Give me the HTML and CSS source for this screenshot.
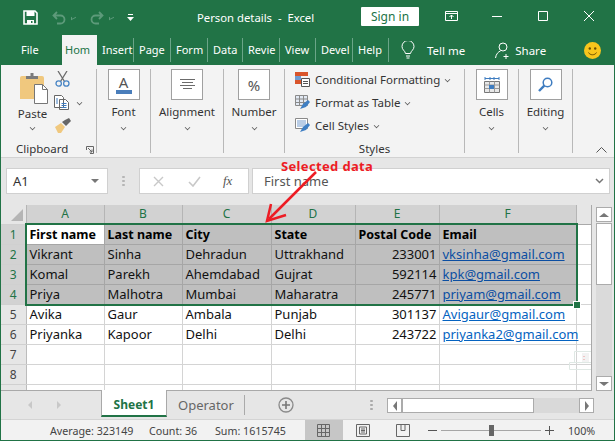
FILE: index.html
```html
<!DOCTYPE html>
<html lang="en">
<head>
  <meta charset="UTF-8" />
  <title>Person details - Excel</title>
  <link rel="stylesheet" href="styles.css">
</head>
<body>
<div class="window">

  <!-- Title bar -->
  <div class="titlebar">
    <svg class="save" width="15" height="15" viewBox="0 0 15 15"><path d="M1 1h11l2 2v11H1z" fill="none" stroke="#fff" stroke-width="1.6"/><path d="M3.5 1h8v5h-8zM4 10h7v4H4z" fill="#fff"/><path d="M8 11h1.5v2H8z" fill="#217346"/></svg>
    <svg class="undo" width="14" height="14" viewBox="0 0 14 14"><path d="M5 1L1.500 4.500 5 8M2 4.500h6.500a4 4 0 0 1 0 8H5" fill="none" stroke="#5d9a7a" stroke-width="1.800"/></svg>
    <span class="qa-caret"></span>
    <svg class="redo" width="14" height="14" viewBox="0 0 14 14"><path d="M9 1l3.500 3.500L9 8M12 4.500H5.500a4 4 0 0 0 0 8H9" fill="none" stroke="#5d9a7a" stroke-width="1.800"/></svg>
    <span class="qa-caret"></span>
    <svg class="qa-more" width="7" height="8" viewBox="0 0 7 8"><path d="M1 0h5v1H1zM0 3h7L3.500 7z" fill="#fff"/></svg>
    <div class="doc-title">Person details &nbsp;-&nbsp; Excel</div>
    <button class="signin">Sign in</button>
    <svg class="win-icon display" width="13" height="10" viewBox="0 0 13 10"><path d="M.5.500h12v9H.500zM.5 2.500h12M6.500 8V4M4.500 6l2-2 2 2" fill="none" stroke="#fff"/></svg>
    <svg class="win-icon minimize" width="10" height="10" viewBox="0 0 10 10"><path d="M0 5.500h10" stroke="#fff"/></svg>
    <svg class="win-icon maximize" width="10" height="10" viewBox="0 0 10 10"><path d="M.5.500h9v9h-9z" fill="none" stroke="#fff"/></svg>
    <svg class="win-icon close" width="10" height="10" viewBox="0 0 10 10"><path d="M0 0l10 10M10 0L0 10" stroke="#fff"/></svg>
  </div>

  <!-- Ribbon tabs -->
  <div class="tabs">
    <span class="tab file">File</span>
    <span class="tab home">Hom</span>
    <span class="tab w37">Insert</span>
    <span class="tab w37">Page</span>
    <span class="tab w37">Form</span>
    <span class="tab w35">Data</span>
    <span class="tab w37">Revie</span>
    <span class="tab w36">View</span>
    <span class="tab w37">Devel</span>
    <span class="tab w36">Help</span>
    <svg class="bulb" width="14" height="18" viewBox="0 0 14 18"><path d="M4.500 12.500C4 9.500 1 9 1 5.500a6 6 0 0 1 12 0c0 3.500-3 4-3.500 7zM5 15h4M5.500 17h3" fill="none" stroke="#fff"/></svg>
    <span class="tell">Tell me</span>
    <svg class="share-icon" width="16" height="17" viewBox="0 0 16 17"><circle cx="8" cy="5" r="4" fill="none" stroke="#fff"/><path d="M.5 16c.5-4 3-6.500 5-7M11 12v5M8.500 14.500h5" fill="none" stroke="#fff"/></svg>
    <span class="share">Share</span>
    <svg class="smiley" width="17" height="17" viewBox="0 0 17 17"><circle cx="8.500" cy="8.500" r="8.500" fill="#f8c51c"/><circle cx="5.800" cy="6.500" r="1.200" fill="#6b4e00"/><circle cx="11.200" cy="6.500" r="1.200" fill="#6b4e00"/><path d="M4.500 10.500c1.500 3 6.500 3 8 0" fill="none" stroke="#6b4e00"/></svg>
  </div>

  <!-- Ribbon -->
  <div class="ribbon">
    <section class="group clipboard">
      <div class="clip-main">
        <div class="paste">
          <svg width="29" height="31" viewBox="0 0 29 31"><path d="M1 5q0-2 2-2h20q2 0 2 2v21H1z" fill="#f0c87e"/><path d="M7 3h4.500V0h3v3H19v3H7z" fill="#7b7b7b"/><path d="M15.500 11.500h8l5 5v14h-13z" fill="#fff" stroke="#767676"/><path d="M23.500 11.500v5h5" fill="none" stroke="#767676"/></svg>
          <span class="paste-label">Paste</span>
          <span class="caret"></span>
        </div>
        <div class="clip-tools">
          <svg width="15" height="16" viewBox="0 0 15 16"><path d="M3 0l6.500 10.500M12 0L5.500 10.500" stroke="#6b6b6b" stroke-width="1.300"/><circle cx="3.700" cy="12.500" r="2.700" fill="none" stroke="#4a86c5" stroke-width="1.300"/><circle cx="11.300" cy="12.500" r="2.700" fill="none" stroke="#4a86c5" stroke-width="1.300"/></svg>
          <div class="copy-row">
            <svg width="15" height="15" viewBox="0 0 15 15"><path d="M.5.500h7l2 2v10h-9zM5.500 4.500h6l3 3v7h-9z" fill="#fff" stroke="#666"/><path d="M7.500 8.500h5M7.500 10.500h5M7.500 12.500h5M2 4h2M2 6h2M2 8h2" stroke="#3e7cc0"/></svg>
            <span class="caret small-gap"></span>
          </div>
          <svg width="16" height="15" viewBox="0 0 16 15"><path d="M0 9l6-4 4 4-4 6H3z" fill="#f0c87e"/><path d="M7 4l4 4 2-2 3-3-2-3-4 2z" fill="#666"/></svg>
        </div>
      </div>
      <div class="group-label clip-label">Clipboard
        <svg class="launcher" width="8" height="8" viewBox="0 0 8 8"><path d="M.5 4V.5H7.500V7.500H4M2 2l4 4M6 3.500V6H3.500" fill="none" stroke="#666"/></svg>
      </div>
    </section>

    <section class="group font-group">
      <div class="big-btn"><span class="font-a">A</span></div>
      <div class="big-label">Font</div>
      <span class="caret"></span>
    </section>

    <section class="group align-group">
      <div class="big-btn">
        <svg width="15" height="11" viewBox="0 0 15 11"><path d="M0 .500h15M2 3.500h11M0 6.500h15M3 9.500h9" stroke="#6b6b6b"/></svg>
      </div>
      <div class="big-label">Alignment</div>
      <span class="caret"></span>
    </section>

    <section class="group number-group">
      <div class="big-btn"><span class="percent">%</span></div>
      <div class="big-label">Number</div>
      <span class="caret"></span>
    </section>

    <section class="group styles-group">
      <div class="style-rows">
        <div class="style-row">
          <svg width="15" height="15" viewBox="0 0 15 15"><path d="M0 0h13v4H0z" fill="#d9552b"/><path d="M0 4h6v4H0z" fill="#6f9bd1"/><path d="M0 8h6v4H0z" fill="#d9552b"/><path d="M6.500 6.500h8v8h-8z" fill="#fff" stroke="#555"/><path d="M8 9.500h5M8 11.500h5" stroke="#555"/></svg>
          <span>Conditional Formatting</span><span class="caret"></span>
        </div>
        <div class="style-row">
          <svg width="15" height="15" viewBox="0 0 15 15"><path d="M.5.500h12v10H.500z" fill="#e2e9f3" stroke="#8a8a8a"/><path d="M.5 4h12M.5 7.500h12M4.500.500v10M8.500.500v10" stroke="#8a8a8a"/><path d="M5 14l3-5 5-4 2 2-4 5z" fill="#3f7fc4"/></svg>
          <span>Format as Table</span><span class="caret"></span>
        </div>
        <div class="style-row">
          <svg width="15" height="15" viewBox="0 0 15 15"><path d="M.5.500h12v10H.500z" fill="#fff" stroke="#8a8a8a"/><path d="M2 2h9v7H2z" fill="#b9cde6"/><path d="M5 14l3-5 5-4 2 2-4 5z" fill="#3f7fc4"/></svg>
          <span>Cell Styles</span><span class="caret"></span>
        </div>
      </div>
      <div class="group-label">Styles</div>
    </section>

    <section class="group cells-group">
      <div class="big-btn">
        <svg width="16" height="16" viewBox="0 0 16 16"><path d="M1 1.500h14M1 0v3M6 0v3M10 0v3M15 0v3" stroke="#3e7cc0"/><path d="M.5 4.500h15v11H.500z" fill="#e8e8e8" stroke="#777"/><path d="M.5 8h15M.5 11.500h15M5.500 4.500v11M10.500 4.500v11" stroke="#999"/><path d="M5 8h5v4H5z" fill="#3e7cc0"/></svg>
      </div>
      <div class="big-label">Cells</div>
      <span class="caret"></span>
    </section>

    <section class="group editing-group">
      <div class="big-btn">
        <svg width="15" height="15" viewBox="0 0 15 15"><circle cx="9.500" cy="5.500" r="4.300" fill="none" stroke="#3e7cc0" stroke-width="1.500"/><path d="M6.300 8.700L1 14" stroke="#3e7cc0" stroke-width="2.400"/></svg>
      </div>
      <div class="big-label">Editing</div>
      <span class="caret"></span>
    </section>

    <svg class="collapse" width="11" height="6" viewBox="0 0 11 6"><path d="M.5 5.500l5-5 5 5" fill="none" stroke="#555"/></svg>
  </div>

  <!-- Formula bar -->
  <div class="formula-bar">
    <div class="name-box"><span>A1</span><span class="name-caret"></span></div>
    <div class="dots"></div>
    <div class="fx-box">
      <svg width="11" height="11" viewBox="0 0 11 11"><path d="M1 1l9 9M10 1l-9 9" stroke="#c8c8c8" stroke-width="1.400"/></svg>
      <svg width="13" height="11" viewBox="0 0 13 11"><path d="M1 6l4 4 7-9" fill="none" stroke="#c8c8c8" stroke-width="1.600"/></svg>
      <span class="fx">fx</span>
    </div>
    <div class="formula-input"><span>First name</span><svg width="9" height="6" viewBox="0 0 9 6"><path d="M1 1l3.500 3.500L8 1" fill="none" stroke="#777" stroke-width="1.500"/></svg></div>
  </div>

  <!-- Sheet -->
  <div class="sheet-area">
    <div class="sheet">
      <table class="grid">
        <colgroup>
          <col class="c-head"><col class="c-a"><col class="c-b"><col class="c-c"><col class="c-d"><col class="c-e"><col class="c-f"><col class="c-g">
        </colgroup>
        <tr class="col-heads">
          <th class="corner"><span class="corner-mark"></span></th><th>A</th><th>B</th><th>C</th><th>D</th><th>E</th><th>F</th><th class="blank"></th>
        </tr>
        <tr class="sel"><th>1</th><td class="active b">First name</td><td class="b">Last name</td><td class="b">City</td><td class="b">State</td><td class="b">Postal Code</td><td class="b">Email</td><td class="out"></td></tr>
        <tr class="sel"><th>2</th><td>Vikrant</td><td>Sinha</td><td>Dehradun</td><td>Uttrakhand</td><td class="num">233001</td><td class="link"><a>vksinha@gmail.com</a></td><td class="out"></td></tr>
        <tr class="sel"><th>3</th><td>Komal</td><td>Parekh</td><td>Ahemdabad</td><td>Gujrat</td><td class="num">592114</td><td class="link"><a>kpk@gmail.com</a></td><td class="out"></td></tr>
        <tr class="sel"><th>4</th><td>Priya</td><td>Malhotra</td><td>Mumbai</td><td>Maharatra</td><td class="num">245771</td><td class="link"><a>priyam@gmail.com</a></td><td class="out"></td></tr>
        <tr><th>5</th><td>Avika</td><td>Gaur</td><td>Ambala</td><td>Punjab</td><td class="num">301137</td><td class="link"><a>Avigaur@gmail.com</a></td><td></td></tr>
        <tr><th>6</th><td>Priyanka</td><td>Kapoor</td><td>Delhi</td><td>Delhi</td><td class="num">243722</td><td class="link"><a>priyanka2@gmail.com</a></td><td></td></tr>
        <tr><th>7</th><td></td><td></td><td></td><td></td><td></td><td></td><td></td></tr>
        <tr><th>8</th><td></td><td></td><td></td><td></td><td></td><td></td><td></td></tr>
        <tr class="cut"><th></th><td></td><td></td><td></td><td></td><td></td><td></td><td></td></tr>
      </table>
      <svg class="watermark" width="25" height="25" viewBox="0 0 25 25"><path d="M.5 16.500h23v7H.500zM5.500 16.500V5.500h19v18" fill="none" stroke="#dfe8e4"/><path d="M13 7h7v9h-7z" fill="#f2f2f2"/><path d="M14 10h2v1h-2zM14 13h2v1h-2z" fill="#f0c4c4"/></svg>
      <div class="selection"><span class="handle"></span></div>
    </div>
    <div class="vscroll">
      <span class="sb-btn"><span class="tri-up"></span></span>
      <span class="v-thumb"></span>
      <span class="v-track"></span>
      <span class="sb-btn"><span class="tri-down"></span></span>
    </div>
  </div>

  <!-- Sheet tabs -->
  <div class="sheet-tabs">
    <span class="nav-tri left"></span>
    <span class="nav-tri right"></span>
    <span class="sheet-tab active-tab">Sheet1</span>
    <span class="sheet-tab">Operator</span>
    <svg class="add" width="16" height="16" viewBox="0 0 16 16"><circle cx="8" cy="8" r="7" fill="none" stroke="#8a8a8a" stroke-width="1.300"/><path d="M8 4v8M4 8h8" stroke="#777" stroke-width="1.600"/></svg>
    <span class="split-dots"></span>
    <div class="hscroll">
      <span class="h-btn"><span class="tri-left"></span></span>
      <span class="h-thumb"></span>
      <span class="h-track"></span>
      <span class="h-btn"><span class="tri-right"></span></span>
    </div>
  </div>

  <!-- Status bar -->
  <div class="statusbar">
    <span class="stat s-avg">Average: 323149</span>
    <span class="stat s-count">Count: 36</span>
    <span class="stat s-sum">Sum: 1615745</span>
    <span class="view-btn on">
      <svg width="13" height="13" viewBox="0 0 13 13"><path d="M.5.500h12v12H.500zM.5 4.500h12M.5 8.500h12M4.500.500v12M8.500.500v12" fill="none" stroke="#666"/></svg>
    </span>
    <span class="view-btn">
      <svg width="14" height="13" viewBox="0 0 14 13"><path d="M.5.500h13v12H.500z" fill="none" stroke="#666"/><path d="M3.500 3h7v7h-7zM5 5h4M5 6.500h4M5 8h4" fill="none" stroke="#666"/></svg>
    </span>
    <span class="view-btn">
      <svg width="14" height="13" viewBox="0 0 14 13"><path d="M.5.500h13v12H.500zM5 .500v6h4v-6" fill="none" stroke="#666"/></svg>
    </span>
    <span class="zoom-minus"></span>
    <span class="slider"><span class="slider-thumb"></span></span>
    <span class="zoom-plus"></span>
    <span class="zoom-val">100%</span>
  </div>

  <!-- Annotation drawn over the sheet -->
  <div class="note">Selected data</div>
  <svg class="note-arrow" width="60" height="56" viewBox="0 0 60 56"><path d="M54 1L7 48" stroke="#ed1c24" stroke-width="2.500" fill="none"/><path d="M9 33L5 50l19-6" stroke="#ed1c24" stroke-width="2.500" fill="none"/></svg>
</div>
</body>
</html>
```

FILE: styles.css
```css
* {
  box-sizing: border-box;
}

html, body {
  margin: 0;
  padding: 0;
}

body {
  font-family: "Noto Sans", "Open Sans", sans-serif;
  font-size: 11.500px;
  color: #333;
  overflow: hidden;
}

.window {
  position: relative;
  width: 615px;
  height: 441px;
  display: flex;
  flex-direction: column;
  border: 1px solid #217346;
  border-top: none;
  background: #e6e6e6;
  overflow: hidden;
}

/* title bar */
.titlebar {
  height: 35px;
  flex: none;
  margin: 0 -1px;
  padding: 0 0 0 23px;
  background: #217346;
  display: flex;
  align-items: center;
  color: #fff;
}
.undo { margin-left: 14px; }
.redo { margin-left: 14px; }
.qa-caret {
  width: 5px;
  height: 3px;
  margin-left: 5px;
  border-left: 1px solid #5d9a7a;
  border-bottom: 1px solid #5d9a7a;
  transform: skewY(-25deg);
}
.qa-more { margin-left: 13px; }
.doc-title {
  margin-left: 63px;
  width: 164px;
  font-size: 11.300px;
  white-space: nowrap;
}
.signin {
  width: 58px;
  height: 19px;
  margin-top: -3px;
  background: #fff;
  color: #217346;
  border: none;
  border-radius: 1px;
  font: 12px "Noto Sans", sans-serif;
  padding: 0;
}
.win-icon { margin-top: -3px; }
.display { margin-left: 26px; }
.minimize { margin-left: 34px; }
.maximize { margin-left: 36px; }
.close { margin-left: 36px; }

/* ribbon tabs */
.tabs {
  height: 30px;
  flex: none;
  margin: 0 -1px;
  padding-left: 21px;
  background: #217346;
  display: flex;
  align-items: center;
  color: #fff;
  font-size: 11.500px;
}
.tab {
  height: 24px;
  line-height: 24px;
  font-size: 11px;
  overflow: hidden;
  white-space: nowrap;
  padding-left: 5px;
  border-right: 1px solid #6ba588;
}
.tab.file {
  width: 41px;
  padding-left: 0;
  border: none;
}
.tab.home {
  width: 35px;
  height: 30px;
  line-height: 30px;
  align-self: flex-end;
  padding-left: 3px;
  background: #f3f3f3;
  color: #217346;
  border: none;
}
.tab.w37 { width: 37px; }
.tab.w35 { width: 35px; }
.tab.w36 { width: 36px; }
.bulb { margin-left: 12px; }
.tell { margin-left: 12px; }
.share-icon { margin-left: 30px; }
.share { margin-left: 4px; }
.smiley { margin-left: 38px; }

/* ribbon */
.ribbon {
  position: relative;
  height: 93px;
  flex: none;
  background: #f3f3f3;
  border-bottom: 1px solid #d2d2d2;
  display: flex;
  padding-top: 4px;
}
.group {
  position: relative;
  height: 84px;
  border-right: 1px solid #b8b8b8;
  display: flex;
  flex-direction: column;
  align-items: center;
}
.clipboard { width: 96px; }
.font-group { width: 54px; }
.align-group { width: 73px; }
.number-group { width: 61px; }
.styles-group { width: 180px; align-items: flex-start; }
.cells-group { width: 54px; }
.editing-group { width: 54px; }

.big-btn {
  width: 32px;
  height: 31px;
  background: #fff;
  border: 1px solid #a0a0a0;
  display: flex;
  align-items: center;
  justify-content: center;
}
.big-label {
  margin-top: 3px;
  line-height: 18px;
}
.caret {
  display: inline-block;
  width: 5px;
  height: 5px;
  border-right: 1px solid #555;
  border-bottom: 1px solid #555;
  transform: rotate(45deg) scale(.8);
}
.big-label + .caret { margin-top: 4px; }
.font-a {
  width: 16px;
  height: 18px;
  line-height: 13px;
  margin-top: 1px;
  text-align: center;
  font-size: 15px;
  color: #555;
  border-bottom: 4px solid #4a7ebb;
}
.percent {
  font-size: 15px;
  color: #555;
}

.clip-main {
  display: flex;
  width: 100%;
  height: 64px;
  padding-left: 17px;
}
.paste {
  width: 30px;
  margin-top: 4px;
  display: flex;
  flex-direction: column;
  align-items: center;
}
.paste-label {
  margin-top: 1px;
  line-height: 18px;
  margin-left: -1px;
}
.paste .caret { margin-left: -1px; margin-top: 2px; }
.clip-tools {
  margin-left: 7px;
  padding-top: 2px;
  display: flex;
  flex-direction: column;
  gap: 8px;
}
.copy-row {
  display: flex;
  align-items: center;
  margin-left: -1px;
  gap: 8px;
}
.group-label {
  position: absolute;
  left: 0;
  right: 0;
  top: 72px;
  line-height: 16px;
  text-align: center;
}
.clip-label {
  text-align: left;
  padding-left: 15px;
}
.launcher {
  position: absolute;
  left: 85px;
  top: 5px;
}
.style-rows {
  padding: 1px 0 0 10px;
  display: flex;
  flex-direction: column;
  gap: 4px;
}
.style-row {
  display: flex;
  align-items: center;
  gap: 5px;
  height: 19px;
  white-space: nowrap;
}
.collapse {
  position: absolute;
  left: 595px;
  top: 82px;
}

/* formula bar */
.formula-bar {
  height: 47px;
  flex: none;
  display: flex;
  align-items: flex-start;
  padding: 10px 0 0 5px;
  font-size: 13px;
}
.name-box {
  width: 102px;
  height: 26px;
  background: #fff;
  border: 1px solid #d0d0d0;
  display: flex;
  align-items: center;
  justify-content: space-between;
  padding: 0 8px 0 6px;
}
.name-caret {
  width: 0;
  height: 0;
  border-left: 4px solid transparent;
  border-right: 4px solid transparent;
  border-top: 4px solid #777;
}
.dots {
  width: 3px;
  height: 11px;
  margin: 7px 14px 0 14px;
  background: radial-gradient(circle, #b5b5b5 1px, transparent 1.500px) 0 0 / 3px 4px;
}
.fx-box {
  width: 110px;
  height: 26px;
  background: #fff;
  border: 1px solid #d0d0d0;
  display: flex;
  align-items: center;
  padding-left: 13px;
  gap: 24px;
}
.fx {
  font: italic 13px "Liberation Serif", serif;
  color: #555;
  margin-left: -2px;
}
.formula-input {
  width: 358px;
  height: 26px;
  margin-left: 3px;
  background: #fff;
  border: 1px solid #d0d0d0;
  display: flex;
  align-items: center;
  justify-content: space-between;
  padding: 0 5px 0 11px;
  color: #555;
  line-height: 16px;
}

/* sheet */
.sheet-area {
  height: 186px;
  flex: none;
  display: flex;
}
.sheet {
  position: relative;
  width: 591px;
  height: 186px;
  overflow: hidden;
  border-right: 1px solid #a9a9a9;
  border-bottom: 1px solid #a9a9a9;
}
.grid {
  border-collapse: collapse;
  table-layout: fixed;
  width: 591px;
  font-size: 13px;
  background: #fff;
}
.c-head { width: 25px; }
.c-a { width: 78px; }
.c-b { width: 78px; }
.c-c { width: 89px; }
.c-d { width: 84px; }
.c-e { width: 84px; }
.c-f { width: 137px; }
.grid tr { height: 20px; }
.grid .col-heads { height: 19px; }
.grid .cut { height: 7px; }
.grid th {
  background: #e6e6e6;
  border-right: 1px solid #bcbcbc;
  border-bottom: 1px solid #d0d0d0;
  padding: 1px 0 0;
  font-weight: normal;
  font-size: 12px;
  color: #444;
  text-align: center;
  line-height: 14px;
  overflow: hidden;
}
.grid .col-heads th {
  background: #d2d2d2;
  color: #217346;
  border-right: 1px solid #b5b5b5;
  padding: 0;
}
.grid .col-heads .corner {
  background: #e6e6e6;
  position: relative;
}
.grid .col-heads .blank {
  background: #e6e6e6;
  border-right: none;
  border-bottom: 1px solid #a9a9a9;
}
.corner-mark {
  position: absolute;
  right: 3px;
  bottom: 3px;
  width: 0;
  height: 0;
  border-left: 12px solid transparent;
  border-bottom: 12px solid #b5b5b5;
}
.grid .sel th {
  background: #d2d2d2;
  color: #217346;
}
.grid td {
  border-right: 1px solid #d4d4d4;
  border-bottom: 1px solid #d4d4d4;
  padding: 0 2px 0 3px;
  color: #111;
  white-space: nowrap;
  line-height: 14px;
}
.grid .sel td {
  background: #bfbfbf;
  border-color: #a6a6a6;
}
.grid .sel td.active { background: #fff; }
.grid .sel td.out {
  background: #fff;
  border-color: #d4d4d4;
}
.grid td.b {
  padding-top: 1px;
  font-size: 12.500px;
  font-weight: bold;
  color: #000;
}
.grid td.num { text-align: right; }
.grid td.link { overflow: visible; }
.grid a {
  color: #0563c1;
  text-decoration: underline;
}
.grid .sel a { color: #0b4ea2; }

.watermark {
  position: absolute;
  left: 568px;
  top: 141px;
}
.selection {
  position: absolute;
  left: 24px;
  top: 18px;
  width: 553px;
  height: 83px;
  border: 2px solid #217346;
  pointer-events: none;
}
.handle {
  position: absolute;
  right: -4px;
  bottom: -4px;
  width: 6px;
  height: 6px;
  background: #217346;
  box-shadow: 0 0 0 1px #fff;
}

/* scrollbars */
.vscroll {
  width: 16px;
  margin: 2px 0 0 4px;
  display: flex;
  flex-direction: column;
  height: 184px;
}
.sb-btn {
  height: 15px;
  flex: none;
  background: #fff;
  border: 1px solid #ababab;
  display: flex;
  align-items: center;
  justify-content: center;
}
.tri-up, .tri-down, .tri-left, .tri-right {
  width: 0;
  height: 0;
  border-style: solid;
  border-color: transparent;
}
.tri-up { border-width: 0 5px 4px; border-bottom-color: #777; }
.tri-down { border-width: 4px 5px 0; border-top-color: #777; }
.tri-left { border-width: 5px 4px 5px 0; border-right-color: #777; }
.tri-right { border-width: 5px 0 5px 4px; border-left-color: #777; }
.v-thumb {
  height: 62px;
  margin-top: 1px;
  flex: none;
  background: #fff;
  border: 1px solid #ababab;
}
.v-track {
  flex: 1;
  background: #dadada;
}

.sheet-tabs {
  height: 28px;
  flex: none;
  display: flex;
  align-items: flex-start;
  position: relative;
}
.nav-tri {
  width: 0;
  height: 0;
  margin-top: 10px;
  border-style: solid;
  border-color: transparent;
}
.nav-tri.left {
  margin-left: 27px;
  border-width: 4px 4px 4px 0;
  border-right-color: #c8c8c8;
}
.nav-tri.right {
  margin-left: 25px;
  border-width: 4px 0 4px 4px;
  border-left-color: #c8c8c8;
}
.sheet-tab {
  height: 25px;
  line-height: 24px;
  font-size: 13px;
  color: #666;
  white-space: nowrap;
}
.active-tab {
  width: 66px;
  margin-left: 40px;
  margin-top: -1px;
  padding-top: 3px;
  height: 27px;
  font-size: 12px;
  text-align: center;
  background: #fff;
  color: #217346;
  font-weight: bold;
  border-left: 1px solid #a9a9a9;
  border-right: 1px solid #a9a9a9;
  border-bottom: 2px solid #217346;
}
.active-tab + .sheet-tab {
  width: 78px;
  padding-left: 11px;
  border-right: 1px solid #aaa;
  height: 20px;
  line-height: 20px;
  margin-top: 4px;
}
.add { margin: 6px 0 0 33px; }
.split-dots {
  width: 3px;
  height: 11px;
  margin: 8px 0 0 76px;
  background: radial-gradient(circle, #aaa 1px, transparent 1.500px) 0 0 / 3px 4px;
}
.hscroll {
  width: 207px;
  height: 15px;
  margin: 7px 0 0 14px;
  display: flex;
}
.h-btn {
  width: 15px;
  flex: none;
  background: #fff;
  border: 1px solid #ababab;
  display: flex;
  align-items: center;
  justify-content: center;
}
.h-thumb {
  width: 132px;
  flex: none;
  background: #fff;
  border: 1px solid #ababab;
}
.h-track {
  flex: 1;
  background: #d9d9d9;
}

/* status bar */
.statusbar {
  height: 22px;
  flex: none;
  background: #f2f2f2;
  border-top: 1px solid #d4d4d4;
  display: flex;
  align-items: center;
  font-size: 10.700px;
  color: #444;
}
.stat {
  white-space: nowrap;
  flex: none;
}
.s-avg { width: 83px; margin-left: 49px; }
.s-count { width: 50px; margin-left: 16px; }
.s-sum { width: 70px; margin-left: 16px; }
.view-btn {
  width: 40px;
  height: 100%;
  display: flex;
  align-items: center;
  justify-content: center;
}
.view-btn.on {
  margin-left: 20px;
  padding-right: 2px;
  width: 38px;
  background: #c6c6c6;
}
.zoom-minus, .zoom-plus {
  position: relative;
  width: 9px;
  height: 9px;
  flex: none;
  background: linear-gradient(#555, #555) center / 9px 1px no-repeat;
}
.zoom-minus { margin-left: 5px; }
.zoom-plus {
  margin-left: 4px;
  background:
    linear-gradient(#555, #555) center / 9px 1px no-repeat,
    linear-gradient(#555, #555) center / 1px 9px no-repeat;
}
.slider {
  position: relative;
  width: 100px;
  height: 1px;
  margin-left: 4px;
  background: #a6a6a6;
}
.slider-thumb {
  position: absolute;
  left: 48px;
  top: -5px;
  width: 5px;
  height: 11px;
  background: #666;
}
.zoom-val { margin-left: 14px; }

/* annotation */
.note {
  position: absolute;
  left: 280px;
  top: 160px;
  line-height: 13px;
  font-size: 13px;
  font-weight: bold;
  letter-spacing: .35px;
  color: #ed1c24;
  white-space: nowrap;
}
.note-arrow {
  position: absolute;
  left: 261px;
  top: 171px;
}
```
